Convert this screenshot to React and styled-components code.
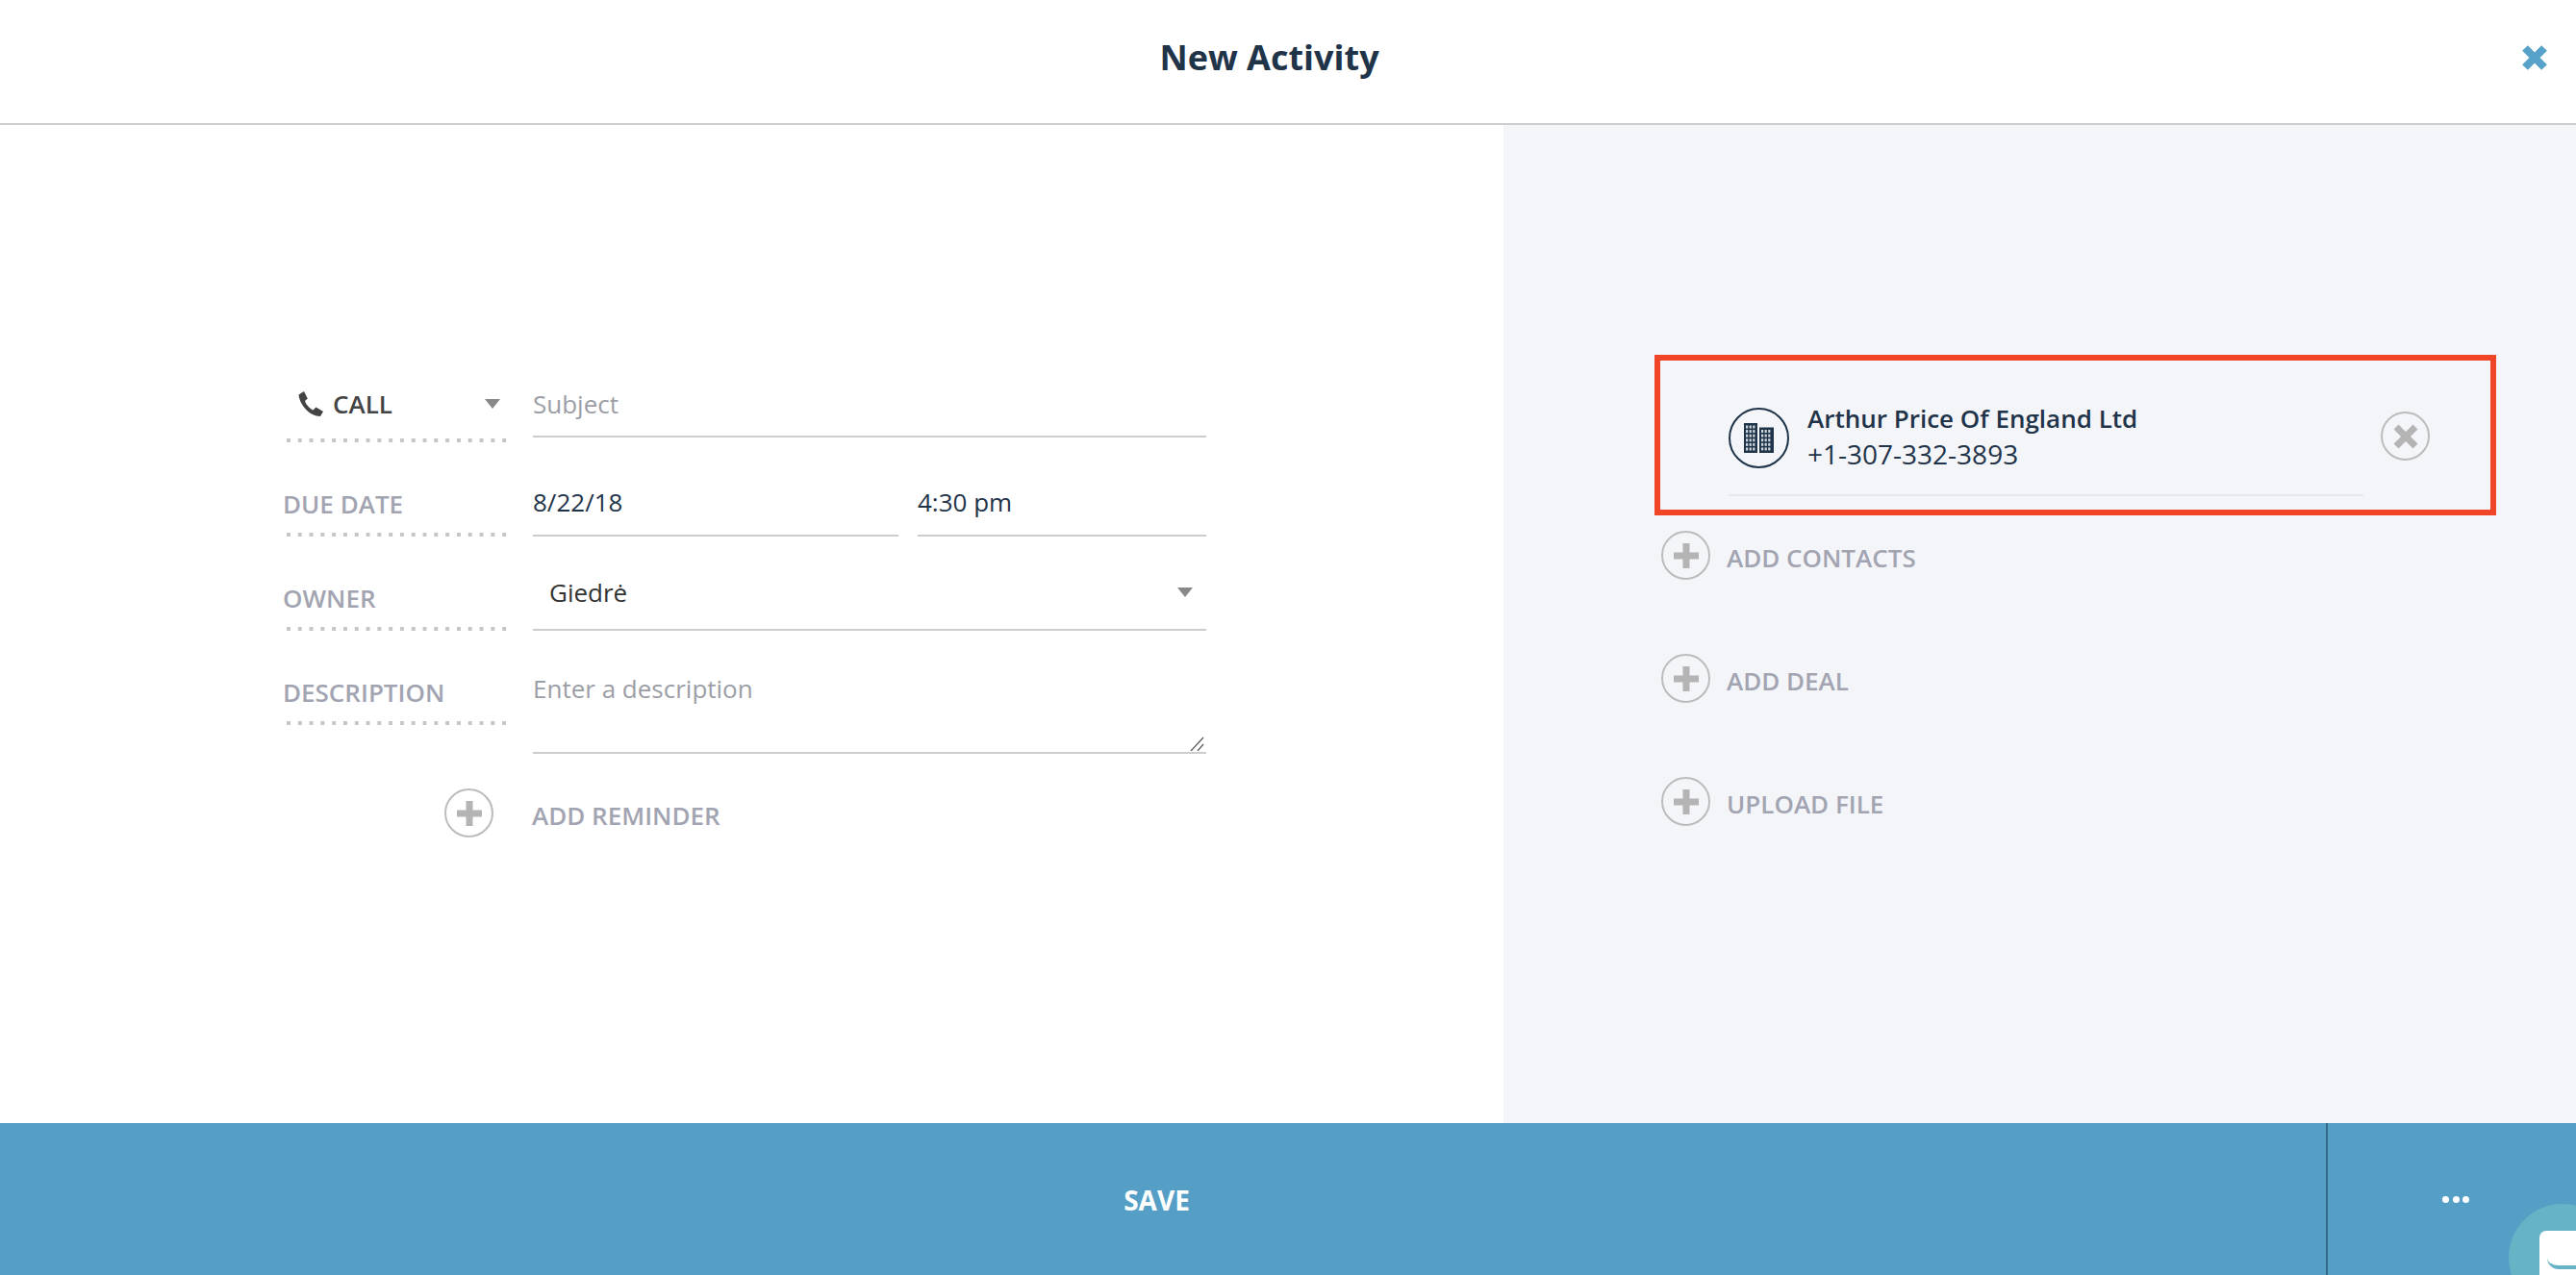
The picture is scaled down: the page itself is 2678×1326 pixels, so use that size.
import React from 'react'
import styled, { createGlobalStyle } from 'styled-components'

const GlobalStyle = createGlobalStyle`
  html, body {
    margin: 0;
    padding: 0;
    background: #fff;
    overflow: hidden;
  }
  * {
    box-sizing: border-box;
  }
`

const Page = styled.div`
  display: flex;
  flex-direction: column;
  height: 100vh;
  font-family: 'Open Sans', 'Liberation Sans', sans-serif;
  color: #1f3349;
`

const Header = styled.header`
  position: relative;
  flex: 0 0 130px;
  display: flex;
  align-items: center;
  justify-content: center;
  padding-bottom: 10px;
  padding-right: 39px;
  border-bottom: 2px solid #cdcdcd;
`

const Title = styled.h1`
  margin: 0;
  font-size: 36px;
  font-weight: 700;
  color: #1f3349;
`

const CloseButton = styled.button`
  position: absolute;
  top: 47px;
  right: 30px;
  display: flex;
  padding: 0;
  border: 0;
  background: none;
`

const Body = styled.main`
  flex: 1;
  display: flex;
  min-height: 0;
`

const FormPanel = styled.section`
  flex: 0 0 1563px;
  padding: 232px 0 0 294px;
`

const Row = styled.div`
  display: grid;
  grid-template-columns: 237px 700px;
  column-gap: 23px;
  height: ${(p) => p.$height || 98}px;
`

const LabelCell = styled.div`
  display: flex;
  flex-direction: column;
  justify-content: flex-start;
  height: 98px;
  padding-top: ${(p) => (p.$type ? 36 : 47)}px;
`

const Label = styled.div`
  height: 34px;
  margin-bottom: 13px;
  font-size: 26px;
  line-height: 34px;
  font-weight: 600;
  color: #a2a4b1;
`

const Dots = styled.div`
  height: 4px;
  margin-left: 4px;
  background: linear-gradient(to right, #c6c6c6 4px, transparent 4px) 0 0 / 11.8px 4px repeat-x;
`

const TypeSelect = styled.div`
  display: flex;
  align-items: center;
  height: 44px;
  margin-bottom: 14px;
  padding-left: 16px;
  font-size: 26px;
  font-weight: 600;
  color: #444;
`

const TypeName = styled.span`
  margin-left: 10px;
`

const Caret = styled.span`
  width: 0;
  height: 0;
  margin-left: auto;
  margin-right: ${(p) => p.$right || 0}px;
  border-left: 8.5px solid transparent;
  border-right: 8.5px solid transparent;
  border-top: 10px solid #888;
`

const FieldCell = styled.div`
  display: flex;
  gap: 20px;
  align-items: flex-end;
  height: 100%;
  padding-bottom: ${(p) => p.$bottom || 0}px;
`

const Input = styled.input`
  flex: ${(p) => p.$flex || 1};
  min-width: 0;
  height: 58px;
  padding: 0 0 ${(p) => p.$pad || 12}px;
  border: 0;
  border-bottom: 2px solid #cdcdcd;
  border-radius: 0;
  outline: none;
  background: none;
  font-family: inherit;
  font-size: 26px;
  color: #1f3349;

  &::placeholder {
    color: #9c9ea6;
    opacity: 1;
  }
`

const OwnerSelect = styled.div`
  display: flex;
  align-items: center;
  width: 100%;
  height: 58px;
  padding: 0 14px 21px 17px;
  border-bottom: 2px solid #cdcdcd;
  font-size: 26px;
  color: #333;
`

const TextareaWrap = styled.div`
  position: relative;
`

const Textarea = styled.textarea`
  display: block;
  width: 100%;
  height: 128px;
  padding: 43px 0 0;
  border: 0;
  border-bottom: 2px solid #cdcdcd;
  border-radius: 0;
  outline: none;
  resize: none;
  background: none;
  font-family: inherit;
  font-size: 26px;
  line-height: 34px;
  color: #1f3349;

  &::placeholder {
    color: #9c9ea6;
    opacity: 1;
  }
`

const Grip = styled.svg`
  position: absolute;
  right: 2px;
  bottom: 3px;
`

const AddRow = styled.div`
  display: flex;
  align-items: center;
  gap: ${(p) => p.$gap || 17}px;
  margin-left: ${(p) => p.$indent || 0}px;
  margin-top: ${(p) => p.$top || 0}px;
`

const AddText = styled.span`
  position: relative;
  top: 2px;
  font-size: 26px;
  font-weight: 600;
  color: #a2a4b1;
`

const RoundIcon = styled.span`
  flex: none;
  display: flex;
  align-items: center;
  justify-content: center;
  width: 51px;
  height: 51px;
  border: 2px solid #bcbcbc;
  border-radius: 50%;
`

const SidePanel = styled.aside`
  flex: 1;
  padding: 239px 0 0 157px;
  background: #f4f5f9;
`

const HighlightCard = styled.div`
  width: 875px;
  height: 167px;
  padding: 49px 0 0 71px;
  border: 6px solid #f04527;
`

const ContactLine = styled.div`
  display: flex;
  align-items: flex-start;
`

const ContactInfo = styled.div`
  flex: 0 0 660px;
  display: flex;
  align-items: center;
  gap: 19px;
  height: 92px;
  padding-bottom: 27px;
  border-bottom: 2px solid #e6e8ec;
`

const Avatar = styled.span`
  flex: none;
  display: flex;
  align-items: center;
  justify-content: center;
  width: 63px;
  height: 63px;
  border: 2.5px solid #1f3349;
  border-radius: 50%;
`

const ContactText = styled.div`
  padding-bottom: 3px;
`

const ContactName = styled.div`
  font-size: 26px;
  line-height: 37px;
  font-weight: 600;
  color: #1f3349;
`

const ContactPhone = styled.div`
  font-size: 28px;
  line-height: 37px;
  color: #1f3349;
`

const RemoveWrap = styled.span`
  margin: 4px 0 0 18px;
`

const SideActions = styled.div`
  display: flex;
  flex-direction: column;
  gap: 77px;
  margin: 16px 0 0 7px;
`

const Footer = styled.footer`
  position: relative;
  flex: 0 0 158px;
  display: flex;
  overflow: hidden;
  background: #559fc7;
`

const SaveButton = styled.button`
  flex: 0 0 2420px;
  padding: 2px 13px 0 0;
  border: 0;
  border-right: 2px solid #2f6a8a;
  background: none;
  font-family: inherit;
  font-size: 28px;
  font-weight: 700;
  color: #fff;
`

const MoreButton = styled.button`
  flex: 1;
  display: flex;
  align-items: center;
  justify-content: center;
  gap: 3.5px;
  padding: 0 0 0 8px;
  border: 0;
  background: none;
`

const Dot = styled.span`
  width: 7px;
  height: 7px;
  border-radius: 50%;
  background: #fff;
`

const ChatBubble = styled.div`
  position: absolute;
  left: 2608px;
  top: 84px;
  width: 112px;
  height: 112px;
  border-radius: 50%;
  background: #66b3c5;
`

const ChatFace = styled.div`
  position: absolute;
  left: 32px;
  top: 28px;
  width: 60px;
  height: 60px;
  border-radius: 7px;
  background: #fff;
`

const ChatSmile = styled.div`
  position: absolute;
  left: 8px;
  top: 28px;
  width: 44px;
  height: 12px;
  border-bottom: 4px solid #66b3c5;
  border-radius: 0 0 22px 22px;
`

function PhoneIcon () {
  return (
    <svg width='26' height='26' viewBox='0 0 26 26'>
      <path
        d='M0.5 3.5 6 0 9.8 7.5 7 10C8 13.5 11.5 17.5 15.5 19.5L18.5 16.5 26 21 23 26C12 26 1.5 14 0.5 3.5Z'
        fill='#444'
      />
    </svg>
  )
}

function PlusIcon () {
  return (
    <svg width='26' height='26' viewBox='0 0 26 26'>
      <path d='M13 0V26M0 13H26' stroke='#b4b4b4' strokeWidth='7' />
    </svg>
  )
}

function CrossIcon ({ size, color, width }) {
  return (
    <svg width={size} height={size} viewBox='0 0 26 26'>
      <path d='M3 3 23 23M23 3 3 23' stroke={color} strokeWidth={width} />
    </svg>
  )
}

function BuildingIcon () {
  const tower = (x, y, w, h, rows) => {
    const windows = []
    for (let r = 0; r < rows; r++) {
      for (let c = 0; c < 3; c++) {
        windows.push(
          <rect key={`${x}-${r}-${c}`} x={x + 2 + c * 3.6} y={y + 2.5 + r * 4.6} width='2.2' height='3' fill='#cfd6dd' />
        )
      }
    }
    return (
      <g>
        <rect x={x} y={y} width={w} height={h} fill='#1f3349' />
        {windows}
      </g>
    )
  }
  return (
    <svg width='31' height='32' viewBox='0 0 31 32'>
      {tower(0, 0, 14, 31, 6)}
      {tower(16, 4.5, 15, 26.5, 5)}
    </svg>
  )
}

function AddAction ({ children, gap, indent, top }) {
  return (
    <AddRow $gap={gap} $indent={indent} $top={top}>
      <RoundIcon><PlusIcon /></RoundIcon>
      <AddText>{children}</AddText>
    </AddRow>
  )
}

function App () {
  return (
    <Page>
      <GlobalStyle />
      <Header>
        <Title>New Activity</Title>
        <CloseButton>
          <CrossIcon size={26} color='#57a2c8' width={8} />
        </CloseButton>
      </Header>
      <Body>
        <FormPanel>
          <Row>
            <LabelCell $type>
              <TypeSelect>
                <PhoneIcon />
                <TypeName>CALL</TypeName>
                <Caret $right={11} />
              </TypeSelect>
              <Dots />
            </LabelCell>
            <FieldCell $bottom={5}>
              <Input $pad={10} placeholder='Subject' />
            </FieldCell>
          </Row>
          <Row>
            <LabelCell>
              <Label>DUE DATE</Label>
              <Dots />
            </LabelCell>
            <FieldCell>
              <Input $flex={380} defaultValue='8/22/18' />
              <Input $flex={300} defaultValue='4:30 pm' />
            </FieldCell>
          </Row>
          <Row>
            <LabelCell>
              <Label>OWNER</Label>
              <Dots />
            </LabelCell>
            <FieldCell>
              <OwnerSelect>
                Giedrė
                <Caret />
              </OwnerSelect>
            </FieldCell>
          </Row>
          <Row $height={128}>
            <LabelCell>
              <Label>DESCRIPTION</Label>
              <Dots />
            </LabelCell>
            <TextareaWrap>
              <Textarea placeholder='Enter a description' />
              <Grip width='15' height='15' viewBox='0 0 15 15'>
                <path d='M1 15 14 1M8 15 14 8' stroke='#555' strokeWidth='1.2' fill='none' />
              </Grip>
            </TextareaWrap>
          </Row>
          <AddAction gap={40} indent={168} top={36}>ADD REMINDER</AddAction>
        </FormPanel>
        <SidePanel>
          <HighlightCard>
            <ContactLine>
              <ContactInfo>
                <Avatar><BuildingIcon /></Avatar>
                <ContactText>
                  <ContactName>Arthur Price Of England Ltd</ContactName>
                  <ContactPhone>+1-307-332-3893</ContactPhone>
                </ContactText>
              </ContactInfo>
              <RemoveWrap>
                <RoundIcon><CrossIcon size={26} color='#b4b4b4' width={7} /></RoundIcon>
              </RemoveWrap>
            </ContactLine>
          </HighlightCard>
          <SideActions>
            <AddAction>ADD CONTACTS</AddAction>
            <AddAction>ADD DEAL</AddAction>
            <AddAction>UPLOAD FILE</AddAction>
          </SideActions>
        </SidePanel>
      </Body>
      <Footer>
        <SaveButton>SAVE</SaveButton>
        <MoreButton>
          <Dot />
          <Dot />
          <Dot />
        </MoreButton>
        <ChatBubble>
          <ChatFace>
            <ChatSmile />
          </ChatFace>
        </ChatBubble>
      </Footer>
    </Page>
  )
}

export default App
